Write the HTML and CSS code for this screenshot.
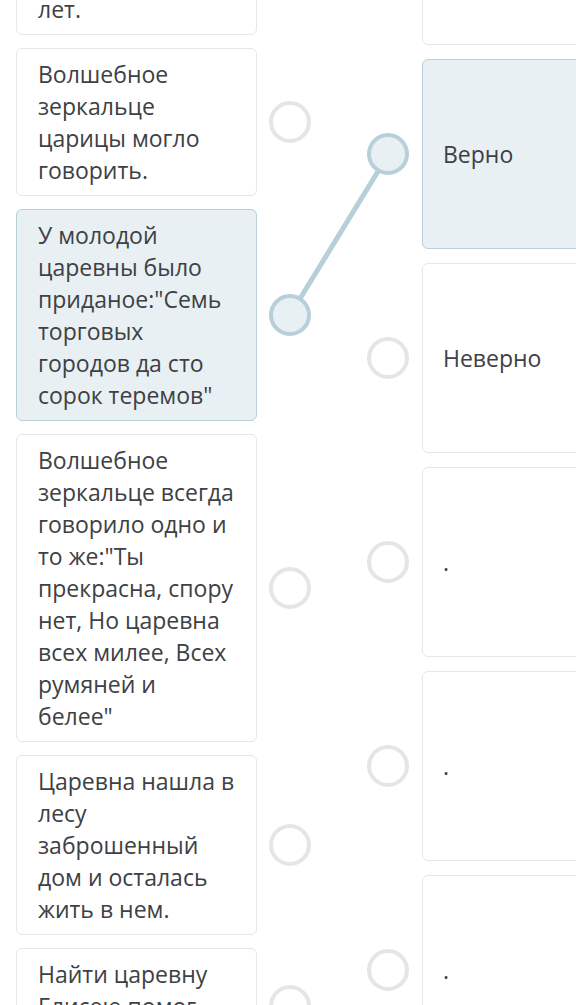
FILE: index.html
```html
<!DOCTYPE html>
<html lang="ru">
<head>
<meta charset="utf-8">
<title>Соотнесите</title>
<link rel="stylesheet" href="styles.css">
</head>
<body>
<div class="board">
  <svg class="links" width="576" height="1005" viewBox="0 0 576 1005" aria-hidden="true">
    <line x1="290" y1="315" x2="388" y2="155" stroke="#b7cfd9" stroke-width="5" stroke-linecap="round"/>
  </svg>
  <div class="col col-left">
    <div class="item">
      <div class="card">Царевне исполнилось восемнадцать лет.</div>
      <span class="dot"></span>
    </div>
    <div class="item">
      <div class="card">Волшебное зеркальце царицы могло говорить.</div>
      <span class="dot"></span>
    </div>
    <div class="item">
      <div class="card selected">У молодой царевны было приданое:"Семь торговых городов да сто сорок теремов"</div>
      <span class="dot selected"></span>
    </div>
    <div class="item">
      <div class="card">Волшебное зеркальце всегда говорило одно и то же:"Ты прекрасна, спору нет, Но царевна всех милее, Всех румяней и белее"</div>
      <span class="dot"></span>
    </div>
    <div class="item">
      <div class="card">Царевна нашла в лесу заброшенный дом и осталась жить в нем.</div>
      <span class="dot"></span>
    </div>
    <div class="item">
      <div class="card">Найти царевну Елисею помог ветер.</div>
      <span class="dot"></span>
    </div>
  </div>
  <div class="col col-right">
    <div class="item">
      <span class="dot"></span>
      <div class="card answer"></div>
    </div>
    <div class="item">
      <span class="dot selected"></span>
      <div class="card answer selected">Верно</div>
    </div>
    <div class="item">
      <span class="dot"></span>
      <div class="card answer">Неверно</div>
    </div>
    <div class="item">
      <span class="dot"></span>
      <div class="card answer">.</div>
    </div>
    <div class="item">
      <span class="dot"></span>
      <div class="card answer">.</div>
    </div>
    <div class="item">
      <span class="dot"></span>
      <div class="card answer">.</div>
    </div>
  </div>
</div>
</body>
</html>
```

FILE: styles.css
```css
html, body {
  margin: 0;
  padding: 0;
  background: #ffffff;
}
body {
  width: 576px;
  height: 1005px;
  overflow: hidden;
  font-family: "Open Sans", "Noto Sans", sans-serif;
  color: #3d4144;
}
.board {
  position: relative;
  display: flex;
  align-items: flex-start;
  gap: 56px;
  padding-left: 16px;
}
.links {
  position: absolute;
  left: 0;
  top: 0;
  z-index: 0;
}
.col {
  display: flex;
  flex-direction: column;
  gap: 13px;
  flex: none;
}
.col-left {
  margin-top: -113px;
}
.col-right {
  margin-top: -145px;
  gap: 14px;
}
.item {
  display: flex;
  align-items: center;
  gap: 12px;
}
.col-right .item {
  gap: 13px;
}
.card {
  box-sizing: border-box;
  width: 241px;
  padding: 9px 20px 9px 21px;
  border: 1.5px solid #e4e7e9;
  border-radius: 6px;
  background: #ffffff;
  font-size: 23px;
  line-height: 32px;
}
.card.selected {
  background: #e8f0f4;
  border-color: #b9d0d8;
}
.card.answer {
  height: 190px;
  display: flex;
  align-items: center;
  padding-left: 20px;
}
.dot {
  position: relative;
  z-index: 1;
  box-sizing: border-box;
  width: 42px;
  height: 42px;
  flex: none;
  border-radius: 50%;
  border: 4px solid #e3e6e8;
  background: #ffffff;
}
.dot.selected {
  background: #e9f0f4;
  border-color: #b7cfd9;
}
```
